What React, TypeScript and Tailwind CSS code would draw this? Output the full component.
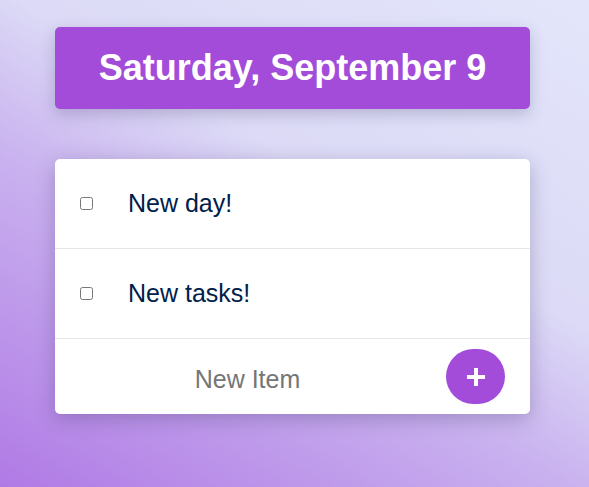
export default function App() {
  const items = ["New day!", "New tasks!"];
  return (
    <div
      className="min-h-[487px] w-full bg-[linear-gradient(30deg,#b07ae5_0%,#c9b1ef_40%,#dcdaf6_60%,#e3e6fb_100%)] pl-[55px] pt-[27px]"
      style={{ fontFamily: '"Liberation Sans", Arial, sans-serif' }}
    >
      <div className="flex h-[82px] w-[475px] items-center justify-center rounded-[5px] bg-[#a24cd9] shadow-[0_5px_15px_rgba(60,50,100,0.25)]">
        <h1 className="text-[36px] font-bold leading-none text-white">Saturday, September 9</h1>
      </div>

      <div className="mt-[50px] w-[475px] overflow-hidden rounded-[5px] bg-white shadow-[0_5px_20px_rgba(60,50,100,0.3)]">
        {items.map((item) => (
          <div key={item} className="flex h-[90px] items-center border-b border-[#e6e6e6]">
            <input type="checkbox" className="ml-[25px] m-0 h-[13px] w-[13px]" />
            <p className="ml-[35px] text-[25px] text-[#00204a]">{item}</p>
          </div>
        ))}
        <form className="flex h-[75px] items-center pr-[25px]">
          <input
            type="text"
            placeholder="New Item"
            className="h-full min-w-0 flex-1 bg-transparent pt-[6px] text-center text-[25px] text-[#00204a] outline-none placeholder:text-[#757575]"
          />
          <button
            type="button"
            className="ml-[6px] flex h-[55px] w-[59px] items-center justify-center rounded-full bg-[#a24cd9]"
          >
            <svg width="20" height="20" viewBox="0 0 20 20">
              <path d="M10 1v18M1 10h18" stroke="white" strokeWidth="4" />
            </svg>
          </button>
        </form>
      </div>
    </div>
  );
}
